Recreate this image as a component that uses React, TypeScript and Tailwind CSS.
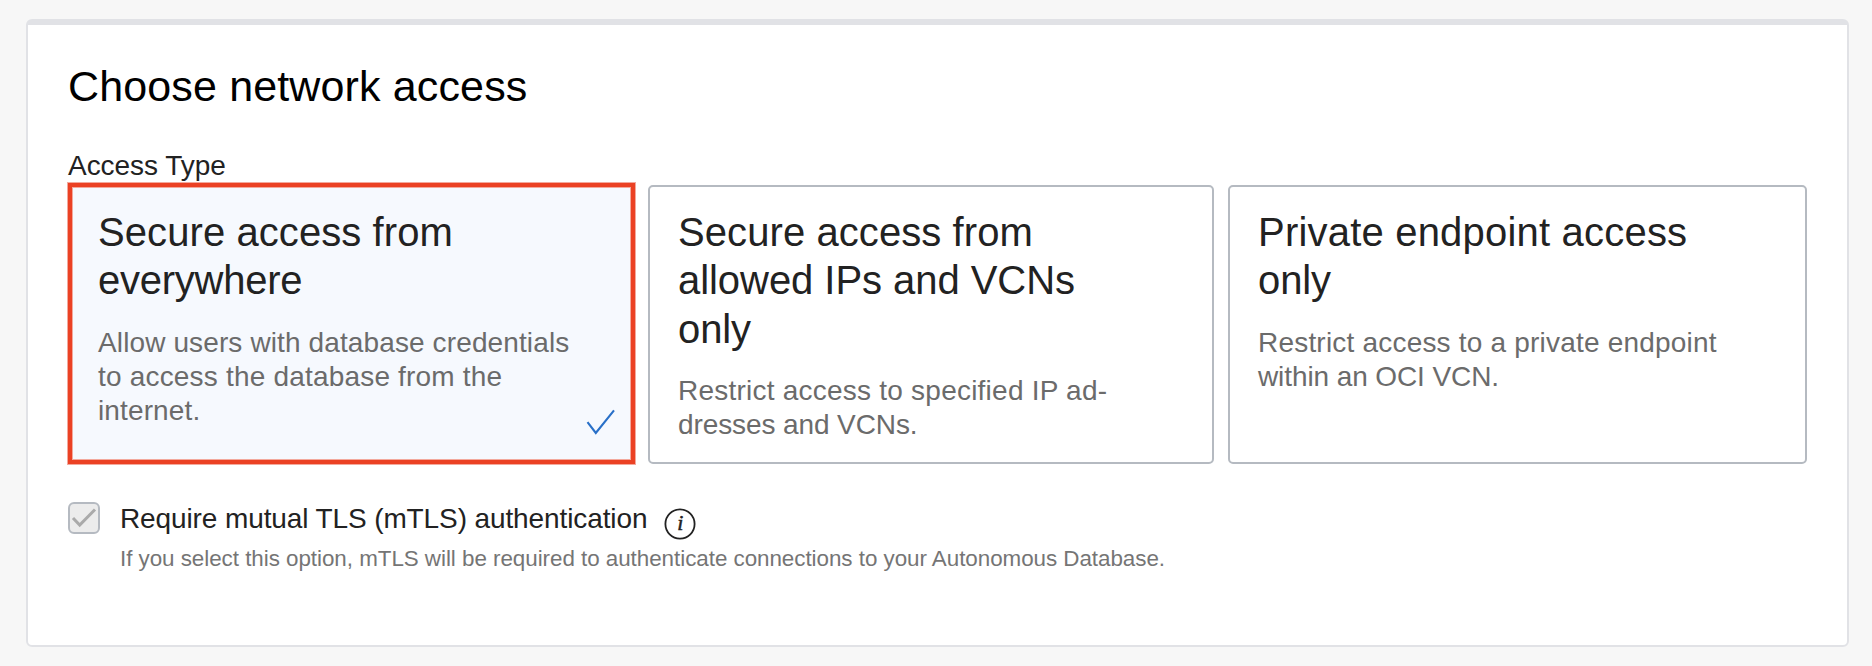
import type { ReactNode } from "react";

type Line = { text: string; tracking: string };

function Lines({ lines }: { lines: Line[] }) {
  return (
    <>
      {lines.map((line) => (
        <span key={line.text} className={`block whitespace-nowrap ${line.tracking}`}>
          {line.text}
        </span>
      ))}
    </>
  );
}

function CardTitle({ lines }: { lines: Line[] }) {
  return (
    <h2 className="text-[40px] leading-[48.3px] text-[#222222]">
      <Lines lines={lines} />
    </h2>
  );
}

function CardText({ lines }: { lines: Line[] }) {
  return (
    <p className="mt-[21.4px] text-[28px] leading-[34px] text-[#6b6b6b]">
      <Lines lines={lines} />
    </p>
  );
}

function OutlineCard({ children }: { children: ReactNode }) {
  return (
    <div className="mt-[2px] h-[279px] rounded-[5px] border-2 border-[#b5bac1] pl-[28px] pt-[21px]">
      {children}
    </div>
  );
}

export default function App() {
  return (
    <div className="h-[666px] w-[1872px] overflow-hidden bg-[#f7f7f7] pl-[26px] pt-[19px] font-['Liberation_Sans',Arial,sans-serif]">
      <section className="flex h-[628px] w-[1823px] flex-col rounded-[6px] border-2 border-t-[6px] border-[#e1e2e6] bg-white pl-[40px]">
        <h1 className="mt-[36px] whitespace-nowrap text-[43px] leading-[50px] tracking-[0.14px] text-black">
          Choose network access
        </h1>
        <div className="mt-[38px] h-[34px] whitespace-nowrap text-[28px] leading-[34px] tracking-[-0.05px] text-[#222222]">
          Access Type
        </div>

        <div className="grid grid-cols-[567px_566px_579px] items-start">
          <div className="flex h-[281px] justify-between border-4 border-[#eb4124] bg-[#f6f9fe] pl-[26px] pr-[15px] pt-[21px] shadow-[0_0_0_1px_#f3a99d,inset_0_0_0_1px_#f3a99d]">
            <div>
              <CardTitle
                lines={[
                  { text: "Secure access from", tracking: "tracking-[0.08px]" },
                  { text: "everywhere", tracking: "tracking-[-0.25px]" },
                ]}
              />
              <CardText
                lines={[
                  { text: "Allow users with database credentials", tracking: "tracking-[0.12px]" },
                  { text: "to access the database from the", tracking: "tracking-[0.19px]" },
                  { text: "internet.", tracking: "tracking-[0.13px]" },
                ]}
              />
            </div>
            <svg className="mb-[25px] h-[26px] w-[30px] shrink-0 self-end" viewBox="0 0 30 26" fill="none" stroke="#2970c8" strokeWidth="2.1">
              <path d="M1.5 13.2 L9.8 24 L28 1.3" />
            </svg>
          </div>
          <div className="ml-[13px] w-[566px]">
            <OutlineCard>
              <CardTitle
                lines={[
                  { text: "Secure access from", tracking: "tracking-[0.08px]" },
                  { text: "allowed IPs and VCNs", tracking: "tracking-[-0.05px]" },
                  { text: "only", tracking: "tracking-[-0.1px]" },
                ]}
              />
              <CardText
                lines={[
                  { text: "Restrict access to specified IP ad-", tracking: "tracking-[0.23px]" },
                  { text: "dresses and VCNs.", tracking: "tracking-[-0.1px]" },
                ]}
              />
            </OutlineCard>
          </div>
          <div className="ml-[27px] w-[579px]">
            <OutlineCard>
              <CardTitle
                lines={[
                  { text: "Private endpoint access", tracking: "tracking-[0.2px]" },
                  { text: "only", tracking: "tracking-[-0.1px]" },
                ]}
              />
              <CardText
                lines={[
                  { text: "Restrict access to a private endpoint", tracking: "tracking-[0.2px]" },
                  { text: "within an OCI VCN.", tracking: "tracking-[-0.1px]" },
                ]}
              />
            </OutlineCard>
          </div>
        </div>

        <div className="mt-[38px] flex items-start">
          <span className="flex size-[32px] items-center justify-center rounded-[6px] border-2 border-[#b5bac1] bg-[#ececec]">
            <svg className="size-[28px]" viewBox="0 0 28 28" fill="none" stroke="#aaaaaa" strokeWidth="3">
              <path d="M3 14 L9.7 21 L25 5.5" />
            </svg>
          </span>
          <div className="ml-[20px]">
            <div className="flex h-[34px] items-start">
              <span className="w-[529px] whitespace-nowrap text-[28px] leading-[34px] tracking-[-0.11px] text-[#222222]">
                Require mutual TLS (mTLS) authentication
              </span>
              <svg className="ml-[15px] mt-[5.5px] size-[32px]" viewBox="0 0 32 32">
                <circle cx="16" cy="16" r="14.6" fill="none" stroke="#222222" strokeWidth="1.8" />
                <text x="16.2" y="22.4" textAnchor="middle" fontSize="22" fontStyle="italic" fontFamily="Liberation Serif" fill="#222222" stroke="#222222" strokeWidth="0.5">i</text>
              </svg>
            </div>
            <p className="mt-[9px] whitespace-nowrap text-[22.4px] leading-[28px] tracking-[-0.04px] text-[#757575]">
              If you select this option, mTLS will be required to authenticate connections to your Autonomous Database.
            </p>
          </div>
        </div>
      </section>
    </div>
  );
}
